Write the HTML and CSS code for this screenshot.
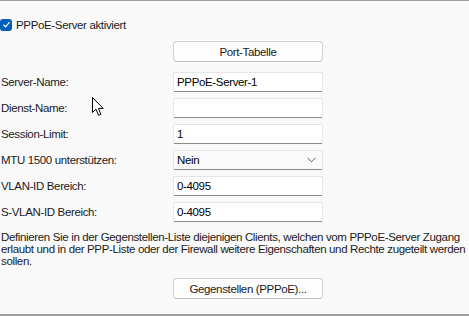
FILE: index.html
```html
<!DOCTYPE html>
<html lang="de">
<head>
    <meta charset="UTF-8">
    <title>PPPoE-Server</title>
    <link rel="stylesheet" href="styles.css">
</head>
<body>
    <div class="panel">
        <label class="check">
            <span class="box">
                <svg width="9" height="9" viewBox="0 0 9 9"><path d="M1.5 4.8 L3.6 6.8 L7.6 2.2" fill="none" stroke="#fff" stroke-width="1.2"/></svg>
            </span>
            PPPoE-Server aktiviert
        </label>

        <div class="btn-row">
            <button class="btn">Port-Tabelle</button>
        </div>

        <div class="fields">
            <span class="label">Server-Name:</span>
            <input class="field" type="text" value="PPPoE-Server-1">

            <span class="label">Dienst-Name:</span>
            <input class="field" type="text" value="">

            <span class="label">Session-Limit:</span>
            <input class="field" type="text" value="1">

            <span class="label">MTU 1500 unterstützen:</span>
            <div class="field select">
                <span>Nein</span>
                <svg width="9" height="6" viewBox="0 0 9 6"><path d="M0.5 0.8 L4.5 4.8 L8.5 0.8" fill="none" stroke="#555" stroke-width="1"/></svg>
            </div>

            <span class="label">VLAN-ID Bereich:</span>
            <input class="field" type="text" value="0-4095">

            <span class="label">S-VLAN-ID Bereich:</span>
            <input class="field" type="text" value="0-4095">
        </div>

        <p class="note">Definieren Sie in der Gegenstellen-Liste diejenigen Clients, welchen vom PPPoE-Server Zugang erlaubt und in der PPP-Liste oder der Firewall weitere Eigenschaften und Rechte zugeteilt werden sollen.</p>

        <div class="btn-row bottom">
            <button class="btn">Gegenstellen (PPPoE)...</button>
        </div>
    </div>

    <!-- mouse pointer -->
    <svg class="cursor" width="14" height="21" viewBox="0 0 14 21">
        <path d="M0.5 0.5 L0.5 15.5 L4 12.2 L6.6 18.3 L8.9 17.3 L6.4 11.4 L11.2 11.4 Z" fill="#fff" stroke="#000" stroke-width="1" stroke-linejoin="miter"/>
    </svg>
</body>
</html>
```

FILE: styles.css
```css
body {
    margin: 0;
    background: #f9f9f9;
    font-family: "Liberation Sans", Arial, sans-serif;
    font-size: 11.5px;
    letter-spacing: -0.35px;
    color: #1b1b1b;
}

.panel {
    height: 313px;
    border-top: 1px solid #a0a0a0;
    border-bottom: 2px solid #a0a0a0;
    display: flex;
    flex-direction: column;
}

.check {
    display: flex;
    align-items: center;
    gap: 4px;
    margin-top: 17px;
    height: 13px;
}

.box {
    width: 12px;
    height: 12px;
    border-radius: 3px;
    background: #005fb8;
    display: flex;
    align-items: center;
    justify-content: center;
}

.btn-row {
    padding-left: 173px;
    margin-top: 10px;
}

.btn {
    width: 150px;
    height: 21px;
    background: #fdfdfd;
    border: 1px solid #d0d0d0;
    border-bottom-color: #c0c0c0;
    border-radius: 4px;
    font-family: inherit;
    font-size: 11.5px;
    letter-spacing: -0.35px;
    color: #1b1b1b;
    padding: 0;
}

.fields {
    display: grid;
    grid-template-columns: 173px 150px;
    grid-auto-rows: 20px;
    row-gap: 6px;
    margin-top: 10px;
    align-items: center;
}

.label {
    padding-left: 1px;
}

.field {
    box-sizing: border-box;
    width: 150px;
    height: 20px;
    background: #fff;
    border: 1px solid #e5e5e5;
    border-bottom: 1px solid #8a8a8a;
    border-radius: 2px;
    font-family: inherit;
    font-size: 11.5px;
    letter-spacing: -0.35px;
    color: #000;
    padding: 0 3px;
    margin: 0;
}

.select {
    background: #fbfbfb;
    display: flex;
    align-items: center;
    justify-content: space-between;
    padding-right: 6px;
}

.note {
    margin: 9px 0 0 1px;
    width: 466px;
    line-height: 12px;
}

.bottom {
    margin-top: 11px;
}

.cursor {
    position: absolute;
    left: 92px;
    top: 97px;
}
```
